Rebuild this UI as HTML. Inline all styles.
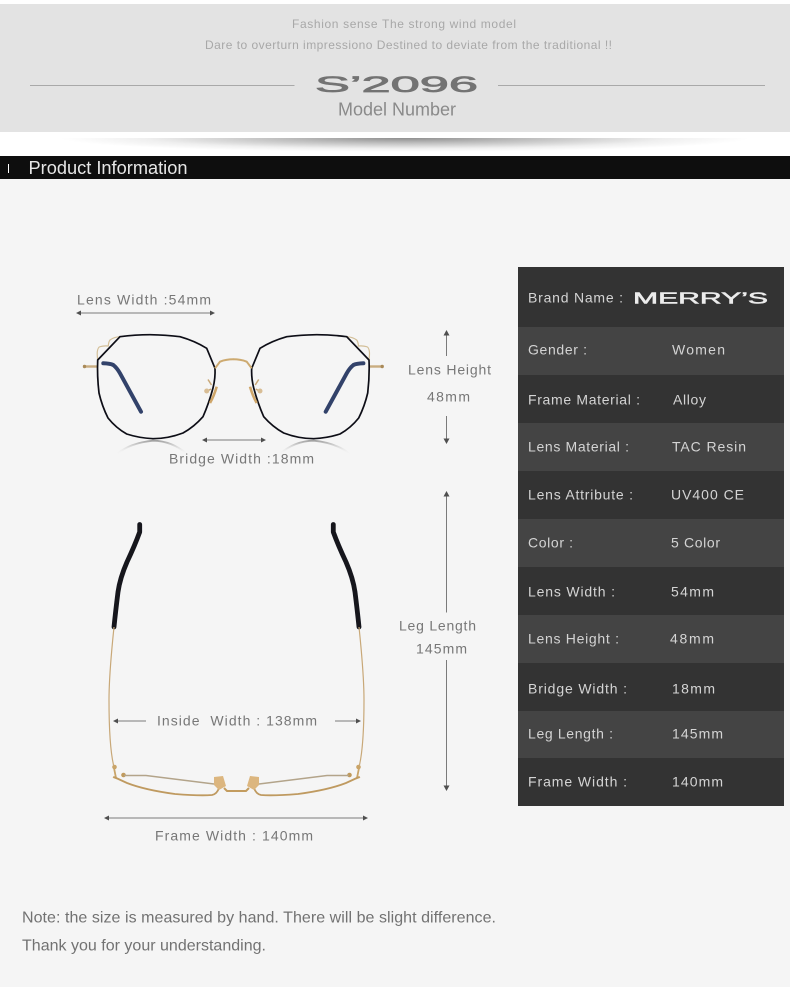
<!DOCTYPE html>
<html lang="en"><head><meta charset="utf-8"><title>Product Information</title>
<style>
html,body{margin:0;padding:0;background:#fff}
#p{position:relative;width:790px;height:992px;overflow:hidden;background:#fff}
.a{position:absolute}
svg{position:absolute;left:0;top:0}
text{font-family:"Liberation Sans",sans-serif}
.l{font-size:14px;fill:#777}
.t{font-size:14px;fill:#d4d4d4}
.n{font-size:16px;fill:#727272}
</style></head><body><div id="p">
<div class="a" style="left:0;top:4px;width:790px;height:128px;background:#e3e3e3"></div>
<div class="a" style="left:60px;top:138px;width:690px;height:14px;background:radial-gradient(ellipse 50% 100% at 50% 0,#8e8e8e 0,#bdbdbd 35%,#efefef 75%,#fff 100%)"></div>
<div class="a" style="left:0;top:156px;width:790px;height:23px;background:#0e0e0e"></div>
<div class="a" style="left:0;top:179px;width:790px;height:808px;background:#f5f5f5"></div>
<div class="a" style="left:8px;top:164px;width:1px;height:9px;background:#fff"></div>
<div class="a" style="left:518px;top:267px;width:266px;height:60px;background:#333"></div>
<div class="a" style="left:518px;top:327px;width:266px;height:48px;background:#444"></div>
<div class="a" style="left:518px;top:375px;width:266px;height:48px;background:#333"></div>
<div class="a" style="left:518px;top:423px;width:266px;height:48px;background:#444"></div>
<div class="a" style="left:518px;top:471px;width:266px;height:48px;background:#333"></div>
<div class="a" style="left:518px;top:519px;width:266px;height:48px;background:#444"></div>
<div class="a" style="left:518px;top:567px;width:266px;height:48px;background:#333"></div>
<div class="a" style="left:518px;top:615px;width:266px;height:48px;background:#444"></div>
<div class="a" style="left:518px;top:663px;width:266px;height:48px;background:#333"></div>
<div class="a" style="left:518px;top:711px;width:266px;height:47px;background:#444"></div>
<div class="a" style="left:518px;top:758px;width:266px;height:48px;background:#333"></div>

<svg width="790" height="992" viewBox="0 0 790 992">
<defs>
<linearGradient id="r" x1="0" y1="0" x2="0" y2="1"><stop offset="0" stop-color="#999" stop-opacity=".9"/><stop offset="1" stop-color="#f5f5f5" stop-opacity="0"/></linearGradient>
<filter id="b" x="-5%" y="-5%" width="110%" height="110%"><feGaussianBlur stdDeviation=".35"/></filter>
<g id="front">
 <path d="M117 454Q130 443 153 440.700Q172 441 187 454" fill="none" stroke="url(#r)" stroke-width="1.800"/>
 <path d="M84 366.500H97.700" stroke="#c9ad80" stroke-width="2.400" fill="none"/>
 <circle cx="84.500" cy="366.500" r="1.700" fill="#a98a58"/>
 <path d="M97.700 360Q97 354 97.300 351.700Q98 347 100 346.700Q104 345.500 108.300 346Q108.500 342 110 340Q114 337 120 336.700" stroke="#d3bf98" stroke-width="1.200" fill="none"/>
 <path d="M103.300 363.300Q110 363.500 113.300 365Q117 368 120 373.300L141 411.700" stroke="#33436b" stroke-width="4" fill="none" stroke-linecap="round"/>
 <path d="M97.700 360L120 336.700Q135 334.700 150 334.700Q166 335 180 336.700Q195 341 206.700 348.300L215 368.300Q215.500 378 213 388Q209 403 203 416.700Q194 427 183 433Q168 438.700 153 438.700Q139 438 126.700 434Q116 428 108 418Q102 406 99 393Q97 376 97.700 360Z" fill="none" stroke="#0d0f16" stroke-width="1.700"/>
 <path d="M215 368.300L220 361.700Q226 359.300 233.500 359.300" stroke="#cdaa70" stroke-width="2" fill="none"/>
 <path d="M216.700 386.700Q214 396 210 403" stroke="#cfa66a" stroke-width="2.600" fill="none"/>
 <path d="M208 379.500L211.500 385M206.500 391.500L211 389" stroke="#c9a878" stroke-width="1.500" fill="none"/>
 <circle cx="206.700" cy="391" r="2.500" fill="#d8bd95"/>
</g>
<g id="leg">
 <path d="M139.700 524.500V532Q135 545 127 562Q120 578 118 592Q115.500 612 114 627" stroke="#13151f" stroke-width="4.800" fill="none" stroke-linecap="round" stroke-linejoin="round"/>
 <path d="M114 627Q109 675 109 700Q109 745 113.500 765" stroke="#c8a878" stroke-width="1.200" fill="none"/>
 <circle cx="114.500" cy="767" r="2.300" fill="#c9a468"/>
 <path d="M114 768L116 778L113 777" stroke="#c9a468" stroke-width="1.800" fill="none"/>
 <circle cx="123.500" cy="775" r="2.300" fill="#c09a5c"/>
 <path d="M124 775.500H146L214 784" stroke="#b3a48a" stroke-width="1.500" fill="none"/>
 <path d="M114 777L127 783Q145 790 175 794Q200 796 212 795Q217 794 219 788" stroke="#bf9a60" stroke-width="1.800" fill="none"/>
 <path d="M214 777L223 776L226 786L219 790L214 785Z" fill="#dcb67f"/>
 <path d="M224 788L227 791H236.500" stroke="#c39c5e" stroke-width="2" fill="none"/>
</g>
</defs>

<text x="292" y="28" font-size="12" fill="#a8a8a8" textLength="224">Fashion sense The strong wind model</text>
<text x="205" y="49" font-size="12" fill="#a8a8a8" textLength="407">Dare to overturn impressiono Destined to deviate from the traditional !!</text>
<path d="M30 85.500H294.500M498 85.500H765" stroke="#a9a9a9" stroke-width="1"/>
<text x="315" y="92" font-size="22" fill="#737373" stroke="#737373" stroke-width=".7" textLength="163" lengthAdjust="spacingAndGlyphs">S’2096</text>
<text x="338" y="115.500" font-size="18" fill="#8a8a8a" textLength="118">Model Number</text>
<text x="28.500" y="174" font-size="18" fill="#e6e6e6" textLength="159" lengthAdjust="spacingAndGlyphs">Product Information</text>

<g filter="url(#b)">
<use href="#front"/>
<use href="#front" transform="matrix(-1 0 0 1 466.700 0)"/>
<use href="#leg"/>
<use href="#leg" transform="matrix(-1 0 0 1 473 0)"/>
</g>

<g stroke="#7a7a7a" stroke-width="1" fill="none">
<path d="M78 313H213M205 440H264M446.500 335V356M446.500 416V441M446.500 495V612.500M446.500 660V787M118 721H146M335 721H358M108 818H365"/>
</g>
<g fill="#4f4f4f">
<path d="M76 313L81 310.500V315.500ZM215 313L210 310.500V315.500ZM202 440L207 437.500V442.500ZM266 440L261 437.500V442.500ZM446.500 330L449.500 335.500H443.500ZM446.500 444L449.500 438.500H443.500ZM446.500 491L449.500 496.500H443.500ZM446.500 791L449.500 785.500H443.500ZM113 721L118 718.500V723.500ZM361 721L356 718.500V723.500ZM104 818L109 815.500V820.500ZM368 818L363 815.500V820.500Z"/>
</g>

<g transform="translate(0 .7)">
<text class="l" x="77" y="304" textLength="134">Lens Width :54mm</text>
<text class="l" x="408" y="374" textLength="83">Lens Height</text>
<text class="l" x="427" y="401" textLength="43">48mm</text>
<text class="l" x="169" y="463" textLength="145">Bridge Width :18mm</text>
<text class="l" x="399" y="630" textLength="77">Leg Length</text>
<text class="l" x="416" y="653" textLength="51">145mm</text>
<text class="l" x="157" y="725" textLength="160">Inside&#160; Width : 138mm</text>
<text class="l" x="155" y="840" textLength="158">Frame Width : 140mm</text>

<text class="t" x="528" y="302" textLength="95">Brand Name :</text>
<text x="633" y="303" font-size="15.500" fill="#ececec" stroke="#ececec" stroke-width=".5" textLength="135" lengthAdjust="spacingAndGlyphs">MERRY’S</text>
<text class="t" x="528" y="354" textLength="59">Gender :</text>
<text class="t" x="672" y="354" textLength="53">Women</text>
<text class="t" x="528" y="404" textLength="112">Frame Material :</text>
<text class="t" x="673" y="404" textLength="33">Alloy</text>
<text class="t" x="528" y="451" textLength="101">Lens Material :</text>
<text class="t" x="672" y="451" textLength="74">TAC Resin</text>
<text class="t" x="528" y="499" textLength="105">Lens Attribute :</text>
<text class="t" x="671" y="499" textLength="73">UV400 CE</text>
<text class="t" x="528" y="547" textLength="45">Color :</text>
<text class="t" x="671" y="547" textLength="49">5 Color</text>
<text class="t" x="528" y="596" textLength="87">Lens Width :</text>
<text class="t" x="671" y="596" textLength="43">54mm</text>
<text class="t" x="528" y="643" textLength="91">Lens Height :</text>
<text class="t" x="670" y="643" textLength="44">48mm</text>
<text class="t" x="528" y="693" textLength="99">Bridge Width :</text>
<text class="t" x="672" y="693" textLength="43">18mm</text>
<text class="t" x="528" y="738" textLength="85">Leg Length :</text>
<text class="t" x="672" y="738" textLength="51">145mm</text>
<text class="t" x="528" y="786" textLength="99">Frame Width :</text>
<text class="t" x="672" y="786" textLength="51">140mm</text>

<text class="n" x="22" y="922" textLength="474">Note: the size is measured by hand. There will be slight difference.</text>
<text class="n" x="22" y="950" textLength="244">Thank you for your understanding.</text>
</g>
</svg>
</div></body></html>
